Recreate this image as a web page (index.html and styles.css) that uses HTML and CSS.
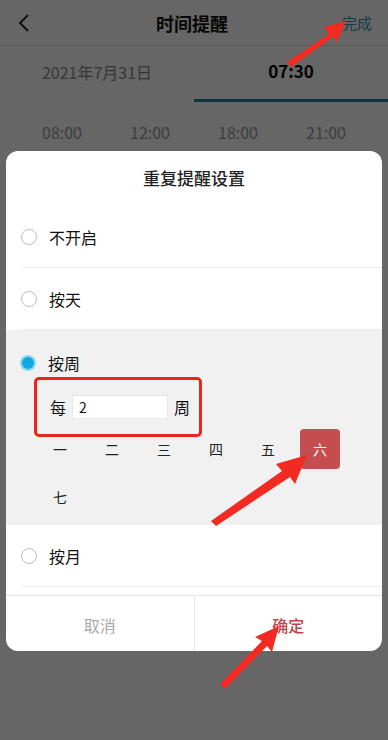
FILE: index.html
```html
<!DOCTYPE html>
<html lang="zh">
<head>
<meta charset="utf-8">
<link rel="stylesheet" href="styles.css">
</head>
<body>
<div class="page">
  <header class="nav">
    <svg class="back" width="12" height="20" viewBox="0 0 12 20"><path d="M10 2 L2 10 L10 18" fill="none" stroke="#222" stroke-width="1.8"/></svg>
    <div class="nav-title">时间提醒</div>
    <div class="nav-done">完成</div>
  </header>
  <div class="tabs">
    <div class="tab">2021年7月31日</div>
    <div class="tab active">07:30</div>
  </div>
  <div class="times">
    <span>08:00</span><span>12:00</span><span>18:00</span><span>21:00</span>
  </div>
</div>
<div class="mask"></div>
<div class="dialog">
  <div class="dlg-title">重复提醒设置</div>
  <div class="opt"><span class="radio"></span><span>不开启</span></div>
  <div class="opt"><span class="radio"></span><span>按天</span></div>
  <div class="week">
    <div class="week-head"><span class="radio on"></span><span>按周</span></div>
    <div class="every">
      <span>每</span>
      <span class="input">2</span>
      <span>周</span>
    </div>
    <div class="days">
      <span>一</span><span>二</span><span>三</span><span>四</span><span>五</span><span class="sel">六</span><span>七</span>
    </div>
  </div>
  <div class="opt"><span class="radio"></span><span>按月</span></div>
  <div class="btns">
    <div class="btn cancel">取消</div>
    <div class="btn ok">确定</div>
  </div>
</div>
<div class="hl-box"></div>
<svg class="arrows" width="388" height="740" viewBox="0 0 388 740">
  <g fill="#f22a22">
    <path d="M287 62 L329 34 L324 27 L346 21 L337 42 L333 37 L291 67 Z"/>
    <path d="M211 521 L282 471 L276 464 L307 455 L295 484 L290 477 L216 526 Z"/>
    <path d="M220 684 L262 641 L255 637 L279 626 L272 652 L267 646 L225 689 Z"/>
  </g>
</svg>
</body>
</html>
```
FILE: styles.css
```css
* { box-sizing: border-box; }
html, body { margin: 0; padding: 0; }
body {
  width: 388px; height: 740px; overflow: hidden;
  font-family: "Noto Sans CJK SC", "Noto Sans", sans-serif;
  background: #fff; color: #111; position: relative;
}
.nav {
  height: 46px; display: flex; align-items: center; justify-content: space-between;
  padding: 0 16px 0 18px; border-bottom: 1px solid #e6e6e6;
}
.nav-title { font-size: 18px; font-weight: 700; color: #111; margin-left: 12px; }
.nav-done { font-size: 15px; color: #2f9bb0; }
.tabs { display: flex; height: 56px; }
.tab { flex: 1; display: flex; align-items: center; justify-content: center; font-size: 16px; color: #8a8a8a; padding-bottom: 4px; }
.tab.active { color: #000; font-weight: 700; border-bottom: 3px solid #1c7f94; font-size: 17px; }
.times { display: flex; justify-content: space-around; padding: 18px 18px 0 18px; font-size: 16px; color: #999; }
.mask { position: absolute; inset: 0; background: rgba(0,0,0,0.6); }
.dialog {
  position: absolute; left: 6px; top: 151px; width: 376px;
  background: #fff; border-radius: 12px; overflow: hidden;
}
.dlg-title { height: 55px; display: flex; align-items: center; justify-content: center; font-size: 17px; font-weight: 500; color: #222; padding-bottom: 2px; }
.opt {
  height: 62px; display: flex; align-items: center; gap: 12px;
  margin-left: 16px; padding-left: 0; border-bottom: 1px solid #ececec;
  font-size: 16px; color: #111;
}
.radio { width: 16px; height: 16px; border-radius: 50%; border: 1.5px solid #bdbdbd; margin-left: -1px; background: #fff; }
.radio.on { background: #10a8e3; border: 2px solid #8fd6f2; }
.week { background: #f1f1f1; padding: 20px 0 8px 0; }
.week-head { display: flex; align-items: center; gap: 12px; padding-left: 15px; font-size: 16px; height: 26px; }
.every { display: flex; align-items: center; gap: 6px; padding-left: 44px; margin-top: 19px; font-size: 16px; }
.input { width: 96px; height: 24px; background: #fff; border: 1px solid #e8e8e8; font-size: 14px; padding-left: 6px; display: flex; align-items: center; }
.days { display: grid; grid-template-columns: repeat(6, 52px); padding-left: 28px; margin-top: 10px; row-gap: 8px; font-size: 14px; color: #222; }
.days span { height: 40px; display: flex; align-items: center; justify-content: center; }
.days .sel { width: 40px; justify-self: center; background: #c54d50; color: #fff; border-radius: 4px; }
.btns { display: flex; height: 56px; border-top: 1px solid #e6e6e6; margin-top: 8px; }
.btn { flex: 1; display: flex; align-items: center; justify-content: center; font-size: 16px; padding-top: 2px; }
.cancel { color: #a8a8a8; border-right: 1px solid #e6e6e6; }
.ok { color: #c0454a; font-weight: 500; }
.hl-box { position: absolute; left: 34px; top: 377px; width: 168px; height: 60px; border: 3px solid #e8261e; border-radius: 5px; }
.arrows { position: absolute; left: 0; top: 0; }
```
